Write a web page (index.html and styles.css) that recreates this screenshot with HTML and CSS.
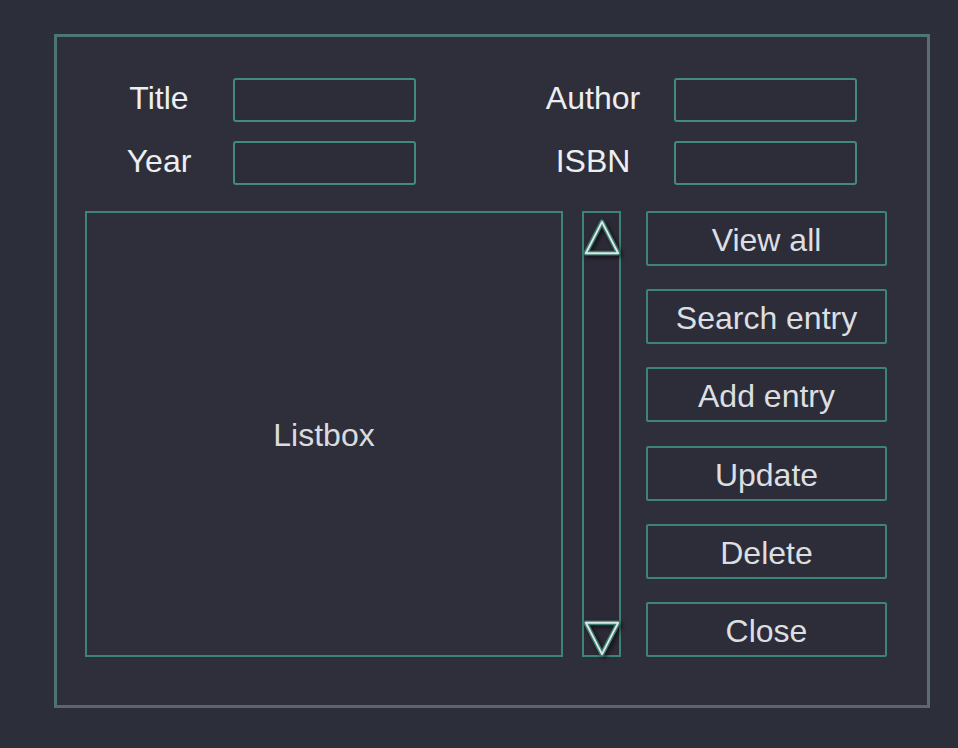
FILE: index.html
```html
<!DOCTYPE html>
<html lang="en">
<head>
<meta charset="utf-8">
<title>Book Store</title>
<link rel="stylesheet" href="styles.css">
</head>
<body>
<div class="window">
  <div class="form">
    <div class="row">
      <label class="label">Title</label>
      <div class="entry"></div>
      <label class="label label-right">Author</label>
      <div class="entry entry-right"></div>
    </div>
    <div class="row">
      <label class="label">Year</label>
      <div class="entry"></div>
      <label class="label label-right">ISBN</label>
      <div class="entry entry-right"></div>
    </div>
  </div>
  <div class="main">
    <div class="listbox">Listbox</div>
    <div class="scrollbar">
      <svg class="arrow arrow-up" viewBox="0 0 40 40" width="40" height="40">
        <path d="M20 3 L37 36 L3 36 Z" fill="none" stroke="#3b7b72" stroke-width="5" stroke-linejoin="round"/>
        <path d="M20 3 L37 36 L3 36 Z" fill="none" stroke="#dfe6e4" stroke-width="2" stroke-linejoin="round"/>
      </svg>
      <svg class="arrow arrow-down" viewBox="0 0 40 40" width="40" height="40">
        <path d="M3 4 L37 4 L20 37 Z" fill="none" stroke="#3b7b72" stroke-width="5" stroke-linejoin="round"/>
        <path d="M3 4 L37 4 L20 37 Z" fill="none" stroke="#dfe6e4" stroke-width="2" stroke-linejoin="round"/>
      </svg>
    </div>
    <div class="buttons">
      <button class="btn">View all</button>
      <button class="btn">Search entry</button>
      <button class="btn">Add entry</button>
      <button class="btn">Update</button>
      <button class="btn">Delete</button>
      <button class="btn">Close</button>
    </div>
  </div>
</div>
</body>
</html>
```
FILE: styles.css
```css
html, body {
  margin: 0;
  padding: 0;
}
body {
  background: #2c2e39;
  width: 958px;
  height: 748px;
  overflow: hidden;
  font-family: "Liberation Sans", Arial, sans-serif;
  padding: 34px 0 0 54px;
  box-sizing: border-box;
}
.window {
  width: 876px;
  height: 674px;
  box-sizing: border-box;
  border: 3px solid;
  border-color: #4b7876 #5a6d74 #5d646e #4c7474;
  background: #2f2e3b;
  padding: 41px 0 0 28px;
}
.form {
  display: flex;
  flex-direction: column;
  gap: 19px;
}
.row {
  display: flex;
  align-items: center;
  height: 44px;
}
.label {
  width: 120px;
  margin-left: 14px;
  margin-top: -4px;
  text-align: center;
  color: #eceef0;
  font-size: 32px;
}
.label-right {
  margin-left: 117px;
}
.entry {
  width: 183px;
  height: 44px;
  box-sizing: border-box;
  margin-left: 14px;
  border: 2px solid #428a7e;
  border-radius: 3px;
  background: #2d2c39;
}
.entry-right {
  margin-left: 21px;
}
.main {
  display: flex;
  margin-top: 26px;
  height: 446px;
}
.listbox {
  width: 478px;
  height: 446px;
  box-sizing: border-box;
  border: 2px solid #3e8378;
  display: flex;
  align-items: center;
  justify-content: center;
  color: #d9dcdf;
  font-size: 32px;
  padding-top: 2px;
}
.scrollbar {
  width: 39px;
  height: 446px;
  box-sizing: border-box;
  margin-left: 19px;
  border: 2px solid #3e8378;
  display: flex;
  flex-direction: column;
  justify-content: space-between;
  align-items: center;
  background: #2b2a36;
}
.arrow {
  display: block;
  width: 38px;
  height: 38px;
  filter: drop-shadow(2px 2px 2px rgba(0,0,0,0.6));
}
.arrow-up {
  margin-top: 6px;
}
.arrow-down {
  margin-bottom: -2px;
}
.buttons {
  margin-left: 25px;
  width: 241px;
  height: 446px;
  display: flex;
  flex-direction: column;
  justify-content: space-between;
}
.btn {
  width: 241px;
  height: 55px;
  box-sizing: border-box;
  border: 2px solid #3e8378;
  border-radius: 2px;
  background: #2d2d39;
  color: #dcdfe2;
  font-family: "Liberation Sans", Arial, sans-serif;
  font-size: 32px;
  padding: 3px 0 0;
  line-height: 1;
}
```
